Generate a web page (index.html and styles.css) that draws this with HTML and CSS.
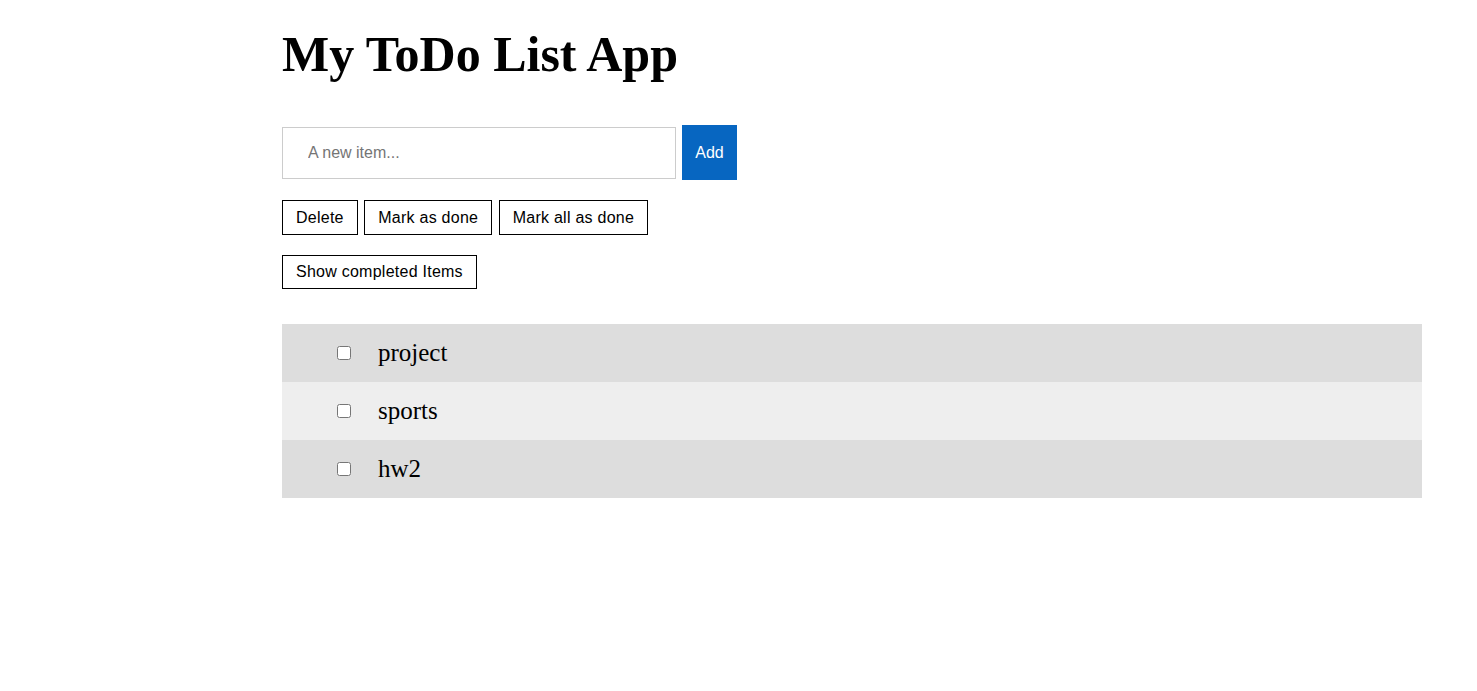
FILE: index.html
```html
<!DOCTYPE html>
<html>
<head>
<meta charset="utf-8">
<title>My ToDo List App</title>
<link rel="stylesheet" href="styles.css">
</head>
<body>
<div class="app">
  <h1 class="title">My ToDo List App</h1>
  <div class="add-row">
    <input class="new-item" type="text" placeholder="A new item...">
    <button class="add-btn">Add</button>
  </div>
  <div class="actions">
    <button class="btn">Delete</button>
    <button class="btn">Mark as done</button>
    <button class="btn">Mark all as done</button>
  </div>
  <div class="actions">
    <button class="btn">Show completed Items</button>
  </div>
  <ul class="list">
    <li class="item"><input type="checkbox" class="check"><span class="label">project</span></li>
    <li class="item"><input type="checkbox" class="check"><span class="label">sports</span></li>
    <li class="item"><input type="checkbox" class="check"><span class="label">hw2</span></li>
  </ul>
</div>
</body>
</html>
```
FILE: styles.css
```css
html, body {
  margin: 0;
  padding: 0;
  background: #fff;
}
body {
  font-family: "Liberation Serif", "Times New Roman", serif;
}
.app {
  margin-left: 282px;
  width: 1140px;
}
.title {
  font-family: "Liberation Serif", serif;
  font-weight: bold;
  font-size: 50px;
  line-height: 58px;
  margin: 25px 0 0 0;
  color: #000;
}
.add-row {
  display: flex;
  align-items: center;
  gap: 6px;
  margin-top: 42px;
}
.new-item {
  box-sizing: border-box;
  width: 394px;
  height: 52px;
  border: 1px solid #ccc;
  padding: 0 0 0 25px;
  font-family: "Liberation Sans", Arial, sans-serif;
  font-size: 16px;
  color: #000;
  outline: none;
}
.new-item::placeholder {
  color: #757575;
}
.add-btn {
  box-sizing: border-box;
  width: 55px;
  height: 55px;
  border: none;
  background: #0766c1;
  color: #fff;
  font-family: "Liberation Sans", Arial, sans-serif;
  font-size: 16px;
  padding: 0;
}
.actions {
  display: flex;
  gap: 6.5px;
  margin-top: 20px;
}
.btn {
  box-sizing: border-box;
  height: 35px;
  padding: 0 13px;
  border: 1px solid #000;
  background: #fff;
  color: #000;
  font-family: "Liberation Sans", Arial, sans-serif;
  font-size: 16px;
  letter-spacing: 0.25px;
}
.actions + .actions .btn {
  height: 34px;
}
.list {
  list-style: none;
  margin: 35px 0 0 0;
  padding: 0;
}
.item {
  display: flex;
  align-items: center;
  height: 58px;
  background: #ddd;
  padding-left: 55px;
}
.item:nth-child(even) {
  background: #eee;
}
.check {
  width: 14px;
  height: 14px;
  margin: 0;
}
.label {
  margin-left: 27px;
  font-size: 25px;
}
```
